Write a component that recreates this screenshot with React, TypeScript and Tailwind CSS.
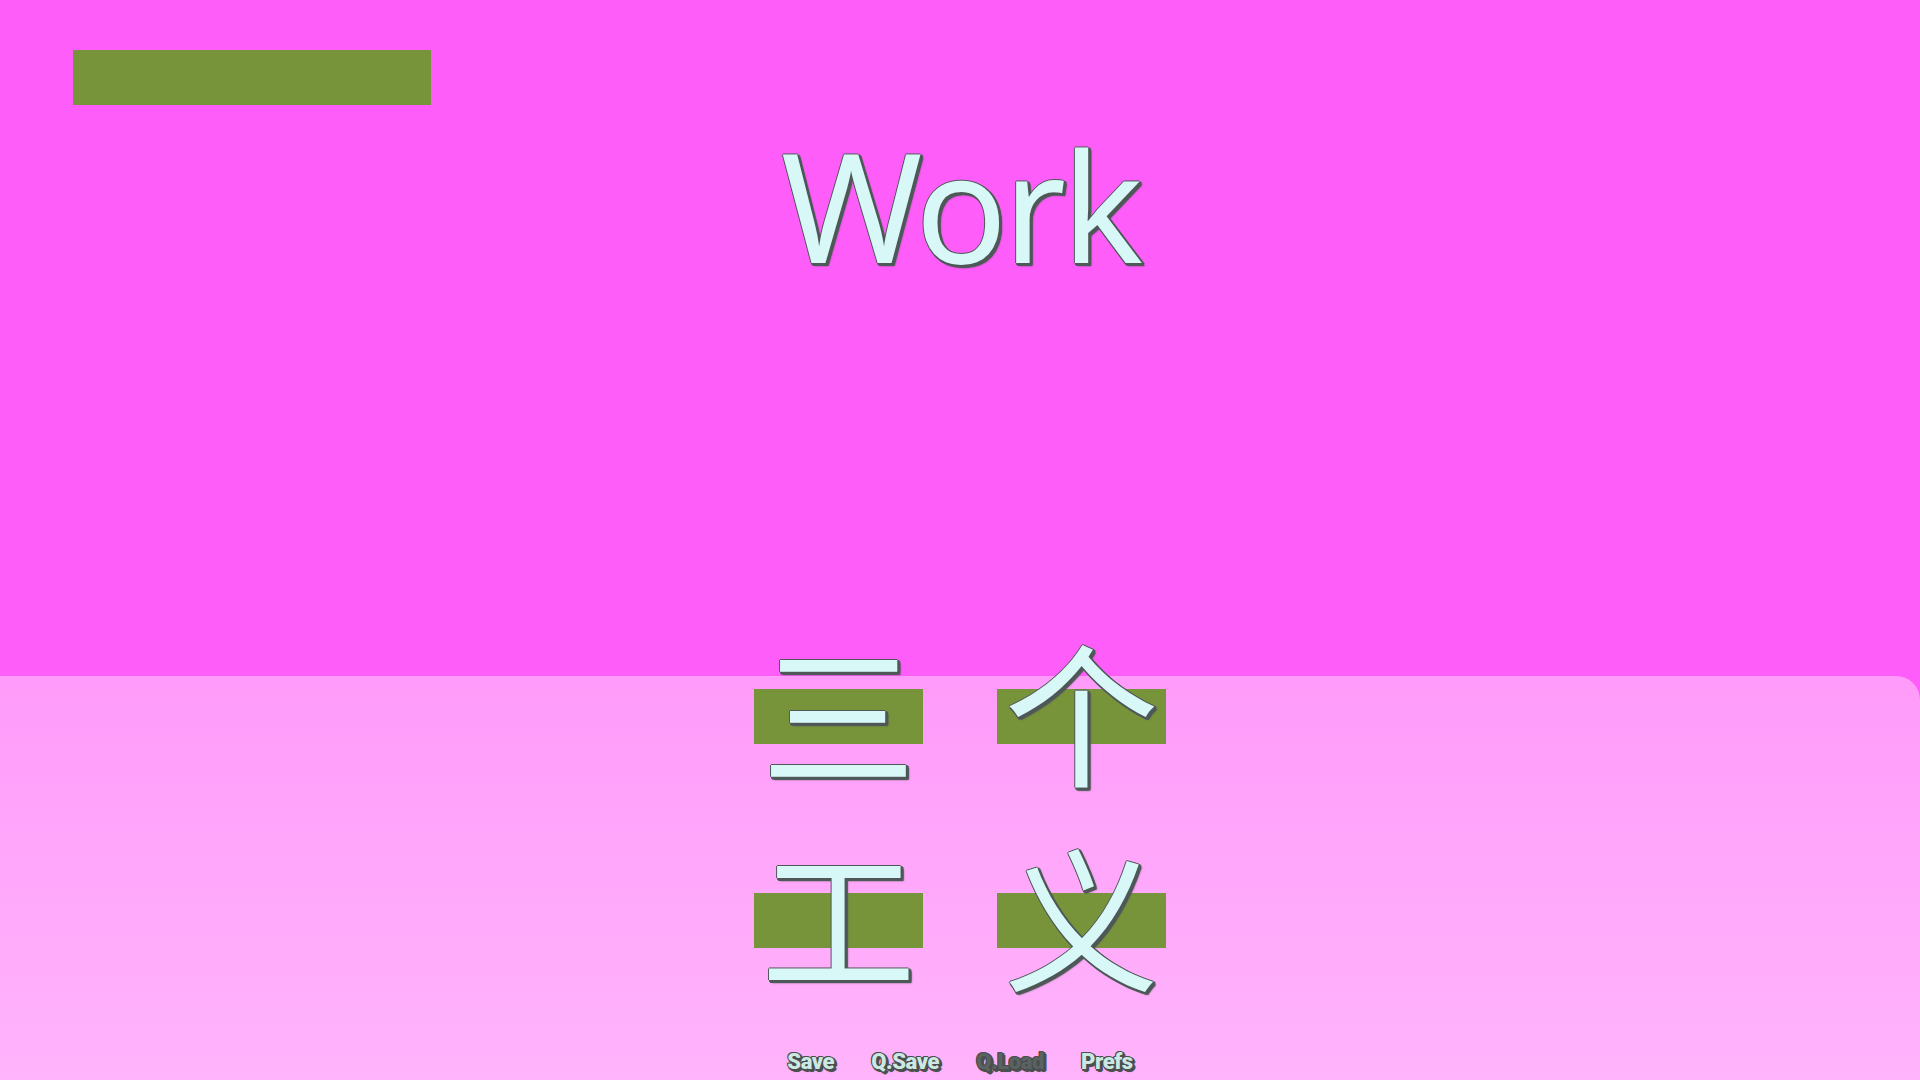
import type { ReactNode } from "react";

const outline =
    "[text-shadow:0_0_1px_#4f5858,-1px_0_0_#4f5858,0_-1px_0_#4f5858,1px_1px_0_#4f5858,2px_2px_0_#4f5858,3px_3px_0_#4f5858,3px_1px_0_#4f5858,1px_3px_0_#4f5858,0_2px_0_#4f5858,2px_0_0_#4f5858,3px_3px_2px_#4f5858]";

const smallOutline =
    "[text-shadow:0_0_1px_#4a4f4f,1px_1px_0_#4a4f4f,2px_2px_0_#4a4f4f,-1px_0_0_#4a4f4f,0_-1px_0_#4a4f4f,-1px_-1px_0_#4a4f4f,2px_0_0_#4a4f4f,0_2px_0_#4a4f4f,3px_2px_0_#4a4f4f,2px_3px_0_#4a4f4f,2px_2px_2px_#4a4f4f]";

function ChoiceButton({ label }: { label: string }) {
    return (
        <button className="flex h-[55px] w-[169px] items-center justify-center bg-[#78943a] p-0">
            <span
                className={`block mt-[-18px] text-[155px] leading-none text-[#d8f8f8] font-['Noto_Sans_CJK_SC','Noto_Sans_CJK_JP',sans-serif] ${outline}`}
            >
                {label}
            </span>
        </button>
    );
}

function QuickItem({ children, dim }: { children: ReactNode; dim?: boolean }) {
    return (
        <span
            className={`text-[22px] font-black leading-none tracking-[-0.4px] font-['Roboto',sans-serif] ${
                dim ? "text-[#5b6262]" : "text-[#cde8e2]"
            } ${smallOutline}`}
        >
            {children}
        </span>
    );
}

export default function App() {
    return (
        <div className="flex h-[1080px] w-[1920px] flex-col overflow-hidden bg-[#ff5df9]">
            <div className="relative flex h-[676px] shrink-0 flex-col">
                <div className="ml-[73px] mt-[50px] h-[55px] w-[358px] bg-[#78943a]" />
                <h1
                    className={`mt-[24px] text-center text-[152px] leading-none tracking-[-4px] text-[#d8f8f8] font-['Noto_Sans',sans-serif] ${outline}`}
                >
                    Work
                </h1>
            </div>
            <div className="flex flex-1 flex-col items-center rounded-tr-[24px] bg-gradient-to-b from-[#ff9bfa] to-[#ffb4fb]">
                <div className="mt-[13px] grid grid-cols-[169px_169px] gap-x-[74px] gap-y-[149px]">
                    <ChoiceButton label="三" />
                    <ChoiceButton label="个" />
                    <ChoiceButton label="工" />
                    <ChoiceButton label="义" />
                </div>
                <div className="mt-auto mb-[7px] flex items-center gap-[37px]">
                    <QuickItem>Save</QuickItem>
                    <QuickItem>Q.Save</QuickItem>
                    <QuickItem dim>Q.Load</QuickItem>
                    <QuickItem>Prefs</QuickItem>
                </div>
            </div>
        </div>
    );
}
